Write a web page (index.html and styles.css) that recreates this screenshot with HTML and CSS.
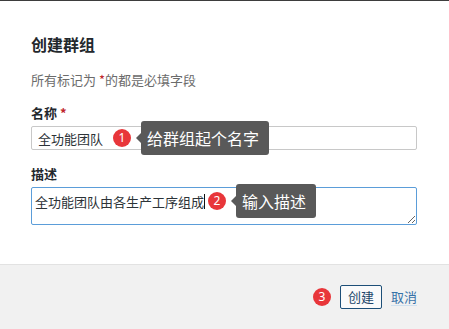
FILE: index.html
```html
<!DOCTYPE html>
<html lang="zh-CN">
<head>
  <meta charset="UTF-8" />
  <title>创建群组</title>
  <link rel="stylesheet" href="styles.css">
</head>
<body>
  <div class="dialog">
    <div class="dialog-body">
      <h2 class="titulo">创建群组</h2>
      <p class="nota">所有标记为 <span class="req">*</span>的都是必填字段</p>

      <div class="campo">
        <label class="rotulo">名称 <span class="req">*</span></label>
        <div class="caixa">
          <input class="entrada" type="text" value="全功能团队" />
          <div class="dica dica-nome">
            <span class="badge">1</span>
            <span class="balao">给群组起个名字</span>
          </div>
        </div>
      </div>

      <div class="campo">
        <label class="rotulo">描述</label>
        <div class="caixa">
          <textarea class="area">全功能团队由各生产工序组成</textarea>
          <div class="dica dica-desc">
            <span class="cursor"></span>
            <span class="badge">2</span>
            <span class="balao">输入描述</span>
          </div>
        </div>
      </div>
    </div>

    <div class="rodape">
      <span class="badge">3</span>
      <button class="btn-criar">创建</button>
      <a class="cancelar" href="#">取消</a>
    </div>
  </div>
</body>
</html>
```

FILE: styles.css
```css
:root {
  --texto: #1d2327;
  --cinza: #646970;
  --vermelho: #e8363a;
  --azul: #2271b1;
  --azul-escuro: #1d4f78;
  --balao: #595959;
}

* {
  box-sizing: border-box;
}

body {
  margin: 0;
  font-family: "Microsoft YaHei", "Noto Sans CJK SC", "Noto Sans", sans-serif;
  color: var(--texto);
  background: #fff;
  border-top: 1px solid #3d3d3d;
  width: 449px;
  height: 329px;
  overflow: hidden;
}

.dialog {
  display: flex;
  flex-direction: column;
  height: 328px;
}

.dialog-body {
  padding: 31px 32px 0 31px;
  flex: 1;
}

.titulo {
  margin: 0;
  font-size: 16px;
  line-height: 24px;
  font-weight: 700;
  color: #23282d;
}

.nota {
  margin: 15px 0 0;
  font-size: 13px;
  line-height: 18px;
  color: #6b6b6b;
}

.req {
  color: #c0262b;
}

.campo {
  margin-top: 15px;
  display: flex;
  flex-direction: column;
  gap: 4px;
}

.rotulo {
  font-size: 13px;
  line-height: 18px;
  font-weight: 700;
  color: #23282d;
}

.caixa {
  position: relative;
}

.entrada {
  display: block;
  width: 100%;
  height: 24px;
  margin: 0;
  padding: 0 6px;
  border: 1px solid #c8c8c8;
  border-radius: 2px;
  font: 13px/22px "Microsoft YaHei", "Noto Sans CJK SC", sans-serif;
  color: #2c3338;
  background: #fff;
  outline: none;
}

.area {
  display: block;
  width: 100%;
  height: 38px;
  margin: 0;
  padding: 5px 3px;
  border: 1px solid #5b9dd9;
  border-radius: 2px;
  font: 13px/18px "Microsoft YaHei", "Noto Sans CJK SC", sans-serif;
  color: #2c3338;
  background: #fff;
  resize: vertical;
  outline: none;
}

/* dicas do tutorial */
.dica {
  position: absolute;
  display: flex;
  align-items: center;
}

.dica-nome {
  left: 82px;
  top: -5px;
}

.dica-desc {
  left: 173px;
  top: -3px;
}

.cursor {
  width: 1px;
  height: 15px;
  background: #111;
  margin-right: 3px;
}

.badge {
  width: 18px;
  height: 18px;
  border-radius: 50%;
  background: var(--vermelho);
  color: #fff;
  font: 12px/18px "Noto Sans", sans-serif;
  text-align: center;
  flex-shrink: 0;
}

.balao {
  position: relative;
  margin-left: 10px;
  height: 34px;
  padding: 0 10px 0 6px;
  background: var(--balao);
  color: #fff;
  border-radius: 3px;
  font-size: 16px;
  line-height: 34px;
  white-space: nowrap;
}

.balao::before {
  content: "";
  position: absolute;
  left: -5px;
  top: 12px;
  border-style: solid;
  border-width: 5px 5px 5px 0;
  border-color: transparent var(--balao) transparent transparent;
}

.rodape {
  height: 65px;
  background: #f1f1f1;
  border-top: 1px solid #e2e2e2;
  display: flex;
  align-items: center;
  justify-content: flex-end;
  gap: 9px;
  padding: 0 32px 1px 0;
}

.btn-criar {
  height: 24px;
  padding: 0 7px;
  border: 1px solid var(--azul-escuro);
  border-radius: 2px;
  background: #fafafa;
  color: #22466a;
  font: 13px/22px "Microsoft YaHei", "Noto Sans CJK SC", sans-serif;
  cursor: pointer;
}

.cancelar {
  font-size: 13px;
  line-height: 18px;
  color: #3772a8;
  text-decoration: underline;
  text-decoration-color: #cfe0ef;
  text-underline-offset: 3px;
}
```
